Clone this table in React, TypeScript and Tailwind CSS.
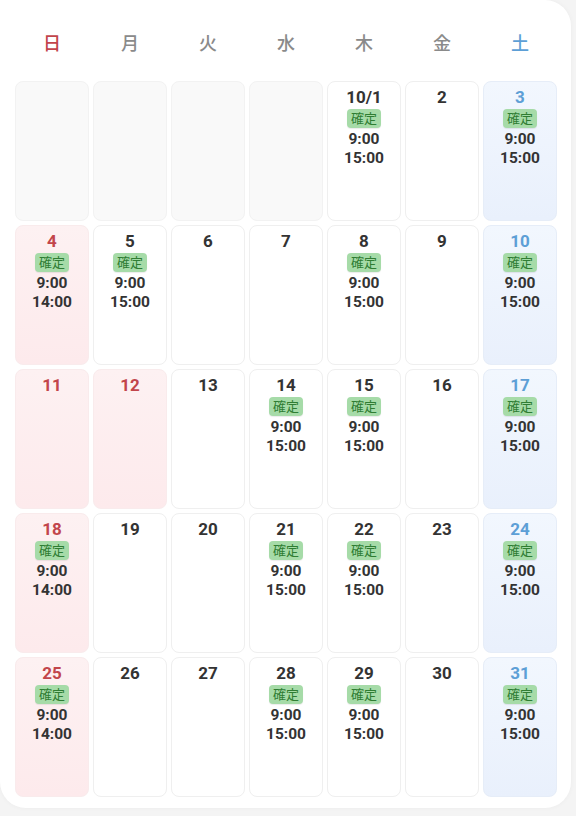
const weekdays = [
  { label: "日", color: "text-[#c2454b]" },
  { label: "月", color: "text-[#8a8a8a]" },
  { label: "火", color: "text-[#8a8a8a]" },
  { label: "水", color: "text-[#8a8a8a]" },
  { label: "木", color: "text-[#8a8a8a]" },
  { label: "金", color: "text-[#8a8a8a]" },
  { label: "土", color: "text-[#5d9fd6]" },
];

type Day = {
  label: string;
  kind: "empty" | "weekday" | "sunday" | "saturday" | "holiday";
  times?: string[];
};

const standard = ["9:00", "15:00"];
const sundayTimes = ["9:00", "14:00"];

const schedule: Record<number, string[]> = {
  1: standard,
  3: standard,
  4: sundayTimes,
  5: standard,
  8: standard,
  10: standard,
  14: standard,
  15: standard,
  17: standard,
  18: sundayTimes,
  21: standard,
  22: standard,
  24: standard,
  25: sundayTimes,
  28: standard,
  29: standard,
  31: standard,
};

const days: Day[] = [];
for (let i = 0; i < 4; i++) days.push({ label: "", kind: "empty" });
for (let d = 1; d <= 31; d++) {
  const col = (d + 3) % 7;
  let kind: Day["kind"] = "weekday";
  if (col === 0) kind = "sunday";
  else if (col === 6) kind = "saturday";
  else if (d === 12) kind = "holiday";
  days.push({ label: d === 1 ? "10/1" : String(d), kind, times: schedule[d] });
}

const cellStyles: Record<Day["kind"], string> = {
  empty: "bg-[#f9f9f9] border-[#f2f2f2]",
  weekday: "bg-white border-[#efefef]",
  sunday: "bg-gradient-to-b from-[#fdf1f2] to-[#fdeaec] border-[#f9ebec]",
  holiday: "bg-gradient-to-b from-[#fdf1f2] to-[#fdeaec] border-[#f9ebec]",
  saturday: "bg-gradient-to-b from-[#f2f7fe] to-[#e9f0fc] border-[#e6edf8]",
};

const numberColor: Record<Day["kind"], string> = {
  empty: "text-[#333]",
  weekday: "text-[#333333]",
  sunday: "text-[#c2454b]",
  holiday: "text-[#c2454b]",
  saturday: "text-[#5d9fd6]",
};

export default function App() {
  return (
    <div
      className="w-[576px] h-[816px] bg-[#f4f4f4] overflow-hidden"
      style={{ fontFamily: 'Roboto, "Noto Sans CJK JP", sans-serif' }}
    >
      <div className="w-[571px] h-[808px] bg-white rounded-br-[26px] rounded-bl-[26px] rounded-tr-[26px] shadow-[0_0_5px_rgba(0,0,0,0.04)] pl-[15px] pt-[23px]">
        <div className="grid grid-cols-[repeat(7,74px)] gap-x-[4px] h-[40px] mb-[18px]">
          {weekdays.map((w) => (
            <div
              key={w.label}
              className={`flex items-center justify-center text-[18px] font-medium ${w.color}`}
            >
              {w.label}
            </div>
          ))}
        </div>

        <div className="grid grid-cols-[repeat(7,74px)] auto-rows-[140px] gap-[4px]">
          {days.map((day, i) => (
            <div
              key={i}
              className={`rounded-[8px] border flex flex-col items-center pt-[5px] ${cellStyles[day.kind]}`}
            >
              {day.label && (
                <div className={`text-[17px] font-bold leading-[21px] ${numberColor[day.kind]}`}>
                  {day.label}
                </div>
              )}
              {day.times && (
                <>
                  <div className="mt-[1px] bg-[#a6dba8] text-[#2f7d33] text-[13px] leading-[19px] px-[4px] rounded-[4px] shadow-[0_1px_1px_rgba(0,0,0,0.08)]">
                    確定
                  </div>
                  <div className="mt-[2px] text-[15.5px] font-bold leading-[19px] text-[#333333] text-center">
                    {day.times.map((t) => (
                      <div key={t}>{t}</div>
                    ))}
                  </div>
                </>
              )}
            </div>
          ))}
        </div>
      </div>
    </div>
  );
}
